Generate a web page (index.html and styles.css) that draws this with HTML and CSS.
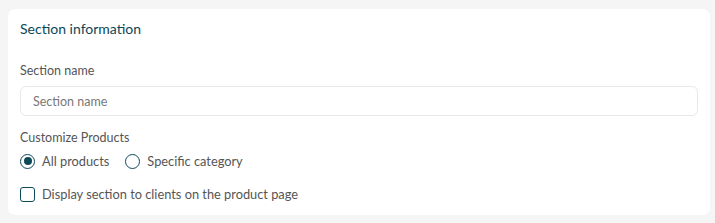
FILE: index.html
```html
<!DOCTYPE html>
<html lang="en">
<head>
  <meta charset="UTF-8" />
  <title>Section information</title>
  <link rel="stylesheet" href="styles.css">
</head>
<body>

<div class="card">
  <div class="card-title">Section information</div>

  <label class="field-label" for="section-name">Section name</label>
  <input id="section-name" class="text-input" type="text" placeholder="Section name">

  <div class="field-label group-label">Customize Products</div>
  <div class="radio-row">
    <label class="option">
      <span class="radio checked"></span>
      All products
    </label>
    <label class="option">
      <span class="radio"></span>
      Specific category
    </label>
  </div>

  <label class="option check-row">
    <span class="checkbox"></span>
    Display section to clients on the product page
  </label>
</div>

</body>
</html>
```

FILE: styles.css
```css
* { margin: 0; padding: 0; box-sizing: border-box; }
body {
  font-family: Lato, "Open Sans", sans-serif;
  background: #f5f5f5;
  padding: 9px 5px 8px 8px;
}
.card {
  background: #fff;
  border-radius: 7px;
  padding: 10px 12px 11px 12px;
  display: flex;
  flex-direction: column;
  align-items: flex-start;
}
.card-title {
  font-size: 14px;
  line-height: 20px;
  color: #0a4657;
  margin-bottom: 24px;
}
.field-label {
  font-size: 12.5px;
  line-height: 16px;
  color: #555;
  margin-bottom: 7px;
}
.text-input {
  width: 100%;
  height: 30px;
  border: 1px solid #e8e8e8;
  border-radius: 6px;
  padding: 0 12px;
  font-family: inherit;
  font-size: 12.5px;
  color: #333;
  outline: none;
}
.text-input::placeholder { color: #777; }
.group-label {
  margin-top: 14px;
  margin-bottom: 5px;
}
.radio-row {
  display: flex;
  gap: 16px;
  height: 20px;
}
.option {
  display: flex;
  align-items: center;
  gap: 7px;
  font-size: 12.8px;
  color: #555;
  line-height: 20px;
}
.radio {
  width: 15px;
  height: 15px;
  border: 1.5px solid #0d4a58;
  border-radius: 50%;
  display: flex;
  align-items: center;
  justify-content: center;
}
.radio.checked::after {
  content: "";
  width: 8px;
  height: 8px;
  border-radius: 50%;
  background: #0d4a58;
}
.check-row {
  margin-top: 13px;
}
.checkbox {
  width: 15px;
  height: 15px;
  border: 1.5px solid #0d4a58;
  border-radius: 3px;
}
```
